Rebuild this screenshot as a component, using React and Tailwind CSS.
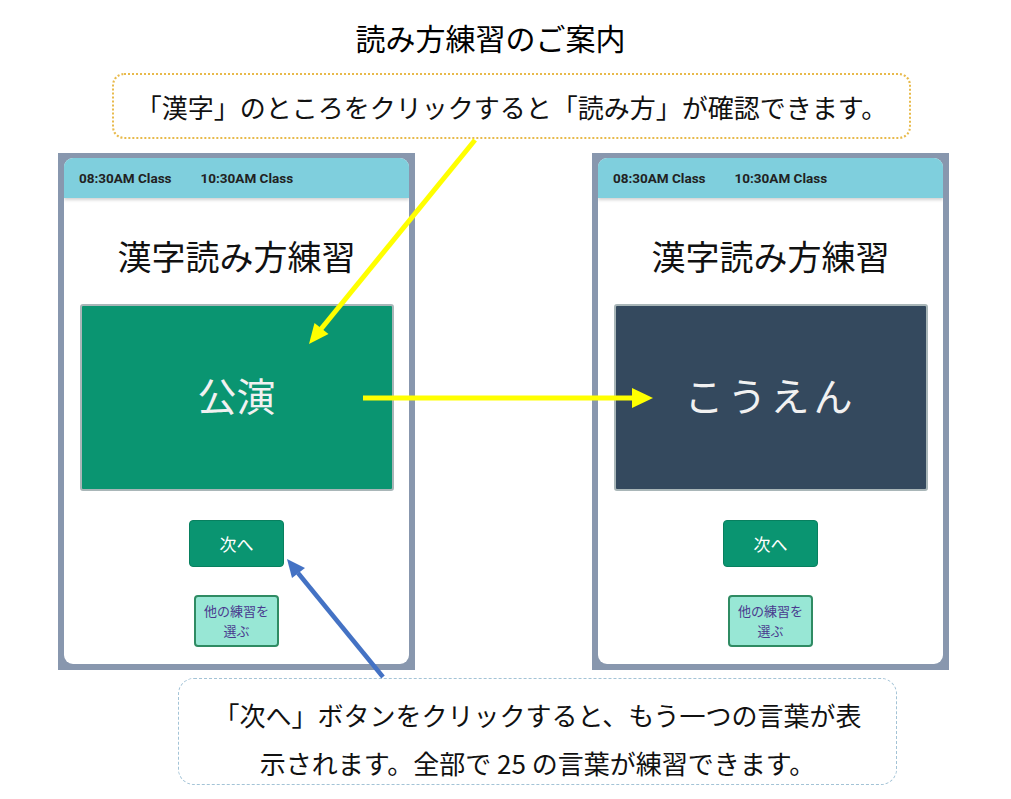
import React from "react";

const jp = { fontFamily: '"Noto Sans CJK JP", "Noto Sans", sans-serif' };

const PhoneScreen = ({ word, dark }) => {
  return (
    <div className="w-[357px] h-[517px] bg-[#8897ae] pt-[5px] px-[6px] pb-[6px]">
      <div className="w-full h-full bg-white rounded-[9px] overflow-hidden flex flex-col items-center">
        {/* tabs */}
        <div
          className="w-full h-[40px] shrink-0 bg-[#7fcfdd] flex items-center pl-[15px] gap-[29px] shadow-[0_2px_3px_rgba(0,0,0,0.18)] text-[13.5px] font-bold text-[#222]"
          style={{ fontFamily: "Roboto, Arial, sans-serif" }}
        >
          <span>08:30AM Class</span>
          <span>10:30AM Class</span>
        </div>

        <h2 className="mt-[34px] text-[34px] leading-[48px] text-[#111]" style={jp}>
          漢字読み方練習
        </h2>

        <div
          className={
            dark
              ? "mt-[24px] w-[314px] h-[187px] bg-[#34495e] border-2 border-[#a9b6b8] rounded-[3px] flex items-center justify-center"
              : "mt-[24px] w-[314px] h-[187px] bg-[#0a9571] border-2 border-[#a9b6b8] rounded-[3px] flex items-center justify-center"
          }
        >
          <span
            className={
              dark
                ? "-mt-[6px] text-[39px] tracking-[4px] text-[#f1f1f1]"
                : "-mt-[6px] text-[39px] text-[#f1f1f1]"
            }
            style={jp}
          >
            {word}
          </span>
        </div>

        <button
          className="mt-[29px] w-[95px] h-[47px] bg-[#0a9571] border border-[#08805f] rounded-[4px] text-white text-[17px]"
          style={jp}
        >
          次へ
        </button>

        <button
          className="mt-[28px] w-[85px] h-[52px] bg-[#98e7d5] border-2 border-[#2f8b63] rounded-[4px] text-[#4a3b8f] text-[13px] leading-[20px]"
          style={jp}
        >
          他の練習を
          <br />
          選ぶ
        </button>
      </div>
    </div>
  );
};

const Arrows = () => (
  <svg className="absolute inset-0 pointer-events-none" width="1011" height="799" viewBox="0 0 1011 799">
    {/* callout -> kanji card */}
    <line x1="475" y1="140" x2="321" y2="329" stroke="#ffff00" strokeWidth="5" />
    <polygon points="309,344 328.5,334 314.5,323" fill="#ffff00" />
    {/* kanji -> reading */}
    <line x1="363" y1="398" x2="634" y2="398" stroke="#ffff00" strokeWidth="5" />
    <polygon points="632,388 653,398 632,408" fill="#ffff00" />
    {/* bottom note -> next button */}
    <line x1="383" y1="677" x2="298" y2="573" stroke="#4472c4" strokeWidth="4.5" />
    <polygon points="287,559 305,568 292,578" fill="#4472c4" />
  </svg>
);

const App = () => {
  return (
    <div className="relative w-[1011px] h-[799px] bg-white overflow-hidden flex flex-col">
      <h1 className="pt-[15px] pr-[30px] text-center text-[30px] leading-[44px] text-black" style={jp}>
        読み方練習のご案内
      </h1>

      <div className="mt-[14px] ml-[112px] w-[799px] h-[66px] border-2 border-dotted border-[#e8ba4c] rounded-[12px] flex items-center justify-center">
        <p className="text-[26px] text-[#111]" style={jp}>
          「漢字」のところをクリックすると「読み方」が確認できます。
        </p>
      </div>

      <div className="mt-[14px] pl-[58px] flex gap-[177px]">
        <PhoneScreen word="公演" />
        <PhoneScreen word="こうえん" dark />
      </div>

      <div className="mt-[8px] ml-[178px] w-[719px] h-[107px] border border-dashed border-[#a3c3d6] rounded-[16px] pt-[12px]">
        <p className="text-center text-[26px] leading-[48px] text-[#111]" style={jp}>
          「次へ」ボタンをクリックすると、もう一つの言葉が表
          <br />
          示されます。全部で 25 の言葉が練習できます。
        </p>
      </div>

      <Arrows />
    </div>
  );
};

export default App;
